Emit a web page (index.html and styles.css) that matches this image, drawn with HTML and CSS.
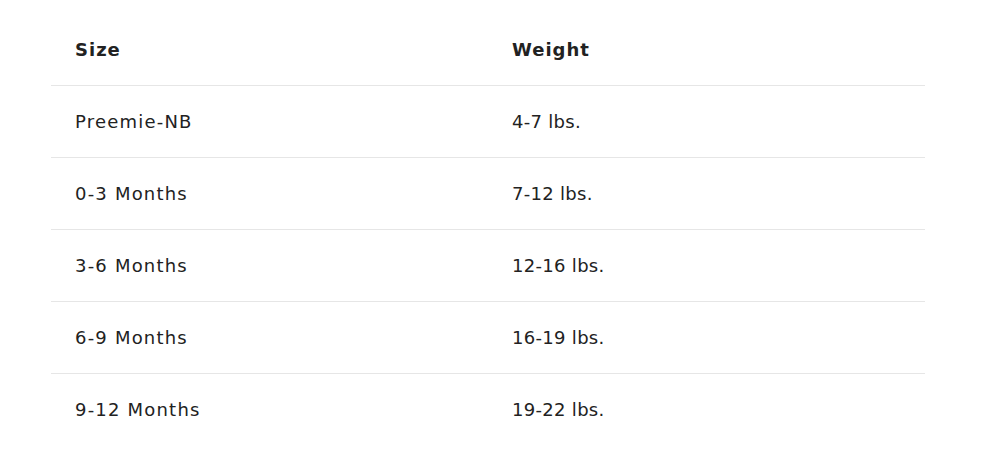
FILE: index.html
```html
<!DOCTYPE html>
<html lang="en">
<head>
<meta charset="utf-8">
<title>Size Chart</title>
<link rel="stylesheet" href="styles.css">
</head>
<body>
<div class="wrap">
  <table class="size-table">
    <thead>
      <tr><th>Size</th><th>Weight</th></tr>
    </thead>
    <tbody>
      <tr><td class="size">Preemie-NB</td><td class="weight">4-7 lbs.</td></tr>
      <tr><td class="size">0-3 Months</td><td class="weight">7-12 lbs.</td></tr>
      <tr><td class="size">3-6 Months</td><td class="weight">12-16 lbs.</td></tr>
      <tr><td class="size">6-9 Months</td><td class="weight">16-19 lbs.</td></tr>
      <tr><td class="size">9-12 Months</td><td class="weight">19-22 lbs.</td></tr>
    </tbody>
  </table>
</div>
</body>
</html>
```
FILE: styles.css
```css
html, body {
  margin: 0;
  padding: 0;
  background: #ffffff;
}
body {
  font-family: "DejaVu Sans", "Liberation Sans", sans-serif;
  color: #222222;
}
.wrap {
  padding: 14px 59px 0 51px;
}
.size-table {
  width: 874px;
  border-collapse: collapse;
  table-layout: fixed;
}
.size-table th,
.size-table td {
  height: 71px;
  padding: 0 24px;
  text-align: left;
  vertical-align: middle;
  font-size: 18px;
  line-height: 22px;
  border-bottom: 1px solid #e6e6e6;
}
.size-table th {
  font-weight: 700;
  letter-spacing: 1px;
}
.size-table .size {
  letter-spacing: 1.2px;
}
.size-table .weight {
  letter-spacing: 0.3px;
}
.size-table tbody tr:last-child td {
  border-bottom: none;
}
```
